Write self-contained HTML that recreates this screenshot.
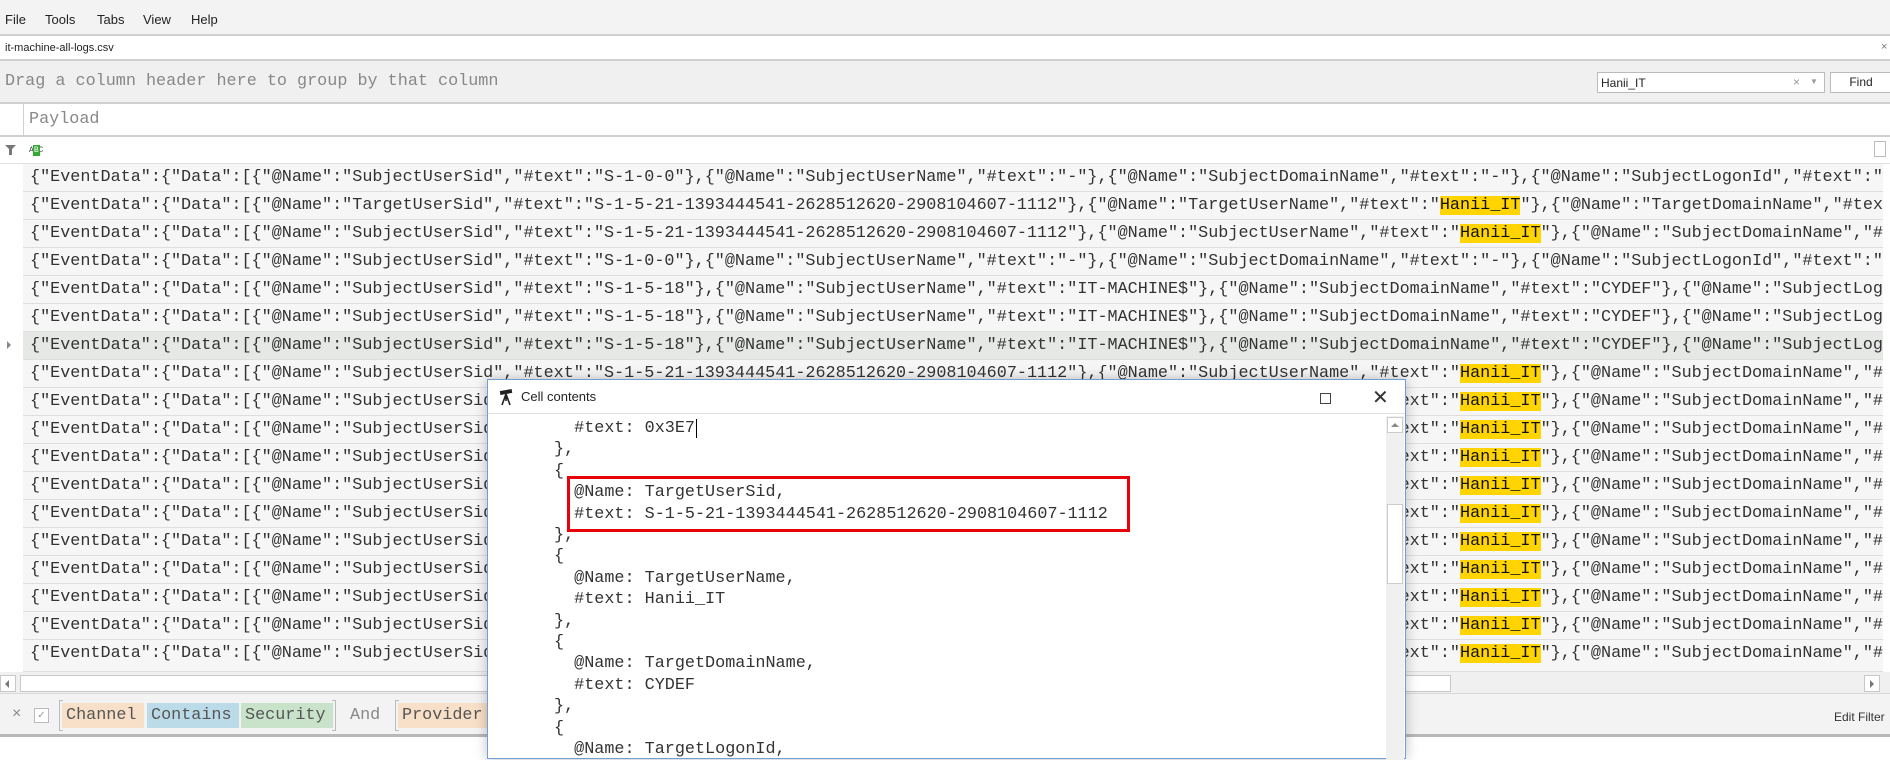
<!DOCTYPE html>
<html><head><meta charset="utf-8"><style>
*{margin:0;padding:0;box-sizing:border-box}
body{width:1890px;height:746px;overflow:hidden;background:#fff;position:relative;font-family:"Liberation Sans",sans-serif;color:#222}
.abs{position:absolute}
.mono{font-family:"Liberation Mono",monospace;font-size:16.8px}
.row{position:absolute;left:23px;width:1860px;height:28px;background:#f6f6f6;border-bottom:1px solid #dedede;white-space:nowrap;overflow:hidden;line-height:27px;padding-left:7px;color:#333}
.hl{background:#ffd400;color:#111}
.dl{position:absolute;left:0;white-space:pre;line-height:21px;color:#333}
.tag{position:absolute;top:703px;height:25px;line-height:25px;padding:0 4px;color:#555}
</style></head><body>
<!-- menu -->
<div class="abs" style="left:0;top:0;width:1890px;height:36px;background:#f3f3f3;border-bottom:2px solid #d0d0d0;font-size:13px">
<span class="abs" style="left:5px;top:12px">File</span>
<span class="abs" style="left:45px;top:12px">Tools</span>
<span class="abs" style="left:97px;top:12px">Tabs</span>
<span class="abs" style="left:143px;top:12px">View</span>
<span class="abs" style="left:191px;top:12px">Help</span>
</div>
<div class="abs" style="left:0;top:36px;width:1890px;height:25px;background:#fff;border-bottom:2px solid #d0d0d0;font-size:11px">
<span class="abs" style="left:5px;top:6px">it-machine-all-logs.csv</span>
<span class="abs" style="left:1881px;top:5px;color:#777">×</span>
</div>
<!-- group panel -->
<div class="abs" style="left:0;top:61px;width:1890px;height:43px;background:#f0f0f0;border-bottom:2px solid #cfcfcf">
<span class="abs mono" style="left:5px;top:11px;color:#888">Drag a column header here to group by that column</span>
</div>
<div class="abs" style="left:1597px;top:72px;width:228px;height:21px;background:#fff;border:1px solid #bbb;font-size:12px">
<span class="abs" style="left:3px;top:3px">Hanii_IT</span>
<span class="abs" style="left:195px;top:2px;color:#999">×</span>
<span class="abs" style="left:212px;top:4px;color:#999;font-size:8px">▼</span>
</div>
<div class="abs" style="left:1830px;top:72px;width:62px;height:21px;background:#fff;border:1px solid #bbb;font-size:12px;text-align:center;line-height:19px">Find</div>
<!-- header -->
<div class="abs" style="left:0;top:104px;width:1890px;height:33px;background:#fff;border-bottom:2px solid #cfcfcf"></div>
<div class="abs" style="left:23px;top:104px;width:1px;height:560px;background:#d0d0d0"></div>
<span class="abs mono" style="left:29px;top:110px;color:#888">Payload</span>
<!-- filter row -->
<div class="abs" style="left:0;top:137px;width:1890px;height:27px;background:#fff;border-bottom:1px solid #e0e0e0"></div>
<svg class="abs" style="left:5px;top:145px" width="11" height="10"><path d="M0 0H11L7 4V10H4V4Z" fill="#777"/></svg>
<span class="abs" style="left:29px;top:146px;font-size:8px;font-family:'Liberation Mono',monospace;color:#444">A<span style="background:#3a3;color:#fff;outline:1px solid #3a3">B</span>C</span>
<div class="abs" style="left:1874px;top:141px;width:12px;height:16px;border:1px solid #bbb;background:#fff"></div>
<!-- rows -->
<div class="mono">
<div class="row" style="top:164px">{"EventData":{"Data":[{"@Name":"SubjectUserSid","#text":"S-1-0-0"},{"@Name":"SubjectUserName","#text":"-"},{"@Name":"SubjectDomainName","#text":"-"},{"@Name":"SubjectLogonId","#text":"0x0"}</div>
<div class="row" style="top:192px">{"EventData":{"Data":[{"@Name":"TargetUserSid","#text":"S-1-5-21-1393444541-2628512620-2908104607-1112"},{"@Name":"TargetUserName","#text":"<span class="hl">Hanii_IT</span>"},{"@Name":"TargetDomainName","#text":"CYDEF"}</div>
<div class="row" style="top:220px">{"EventData":{"Data":[{"@Name":"SubjectUserSid","#text":"S-1-5-21-1393444541-2628512620-2908104607-1112"},{"@Name":"SubjectUserName","#text":"<span class="hl">Hanii_IT</span>"},{"@Name":"SubjectDomainName","#text":"CYDEF"}</div>
<div class="row" style="top:248px">{"EventData":{"Data":[{"@Name":"SubjectUserSid","#text":"S-1-0-0"},{"@Name":"SubjectUserName","#text":"-"},{"@Name":"SubjectDomainName","#text":"-"},{"@Name":"SubjectLogonId","#text":"0x0"}</div>
<div class="row" style="top:276px">{"EventData":{"Data":[{"@Name":"SubjectUserSid","#text":"S-1-5-18"},{"@Name":"SubjectUserName","#text":"IT-MACHINE$"},{"@Name":"SubjectDomainName","#text":"CYDEF"},{"@Name":"SubjectLogonId"}</div>
<div class="row" style="top:304px">{"EventData":{"Data":[{"@Name":"SubjectUserSid","#text":"S-1-5-18"},{"@Name":"SubjectUserName","#text":"IT-MACHINE$"},{"@Name":"SubjectDomainName","#text":"CYDEF"},{"@Name":"SubjectLogonId"}</div>
<div class="row" style="top:332px;background:#e5e8e5">{"EventData":{"Data":[{"@Name":"SubjectUserSid","#text":"S-1-5-18"},{"@Name":"SubjectUserName","#text":"IT-MACHINE$"},{"@Name":"SubjectDomainName","#text":"CYDEF"},{"@Name":"SubjectLogonId"}</div>
<div class="row" style="top:360px">{"EventData":{"Data":[{"@Name":"SubjectUserSid","#text":"S-1-5-21-1393444541-2628512620-2908104607-1112"},{"@Name":"SubjectUserName","#text":"<span class="hl">Hanii_IT</span>"},{"@Name":"SubjectDomainName","#text":"CYDEF"}</div>
<div class="row" style="top:388px">{"EventData":{"Data":[{"@Name":"SubjectUserSid","#text":"S-1-5-21-1393444541-2628512620-2908104607-1112"},{"@Name":"SubjectUserName","#text":"<span class="hl">Hanii_IT</span>"},{"@Name":"SubjectDomainName","#text":"CYDEF"}</div>
<div class="row" style="top:416px">{"EventData":{"Data":[{"@Name":"SubjectUserSid","#text":"S-1-5-21-1393444541-2628512620-2908104607-1112"},{"@Name":"SubjectUserName","#text":"<span class="hl">Hanii_IT</span>"},{"@Name":"SubjectDomainName","#text":"CYDEF"}</div>
<div class="row" style="top:444px">{"EventData":{"Data":[{"@Name":"SubjectUserSid","#text":"S-1-5-21-1393444541-2628512620-2908104607-1112"},{"@Name":"SubjectUserName","#text":"<span class="hl">Hanii_IT</span>"},{"@Name":"SubjectDomainName","#text":"CYDEF"}</div>
<div class="row" style="top:472px">{"EventData":{"Data":[{"@Name":"SubjectUserSid","#text":"S-1-5-21-1393444541-2628512620-2908104607-1112"},{"@Name":"SubjectUserName","#text":"<span class="hl">Hanii_IT</span>"},{"@Name":"SubjectDomainName","#text":"CYDEF"}</div>
<div class="row" style="top:500px">{"EventData":{"Data":[{"@Name":"SubjectUserSid","#text":"S-1-5-21-1393444541-2628512620-2908104607-1112"},{"@Name":"SubjectUserName","#text":"<span class="hl">Hanii_IT</span>"},{"@Name":"SubjectDomainName","#text":"CYDEF"}</div>
<div class="row" style="top:528px">{"EventData":{"Data":[{"@Name":"SubjectUserSid","#text":"S-1-5-21-1393444541-2628512620-2908104607-1112"},{"@Name":"SubjectUserName","#text":"<span class="hl">Hanii_IT</span>"},{"@Name":"SubjectDomainName","#text":"CYDEF"}</div>
<div class="row" style="top:556px">{"EventData":{"Data":[{"@Name":"SubjectUserSid","#text":"S-1-5-21-1393444541-2628512620-2908104607-1112"},{"@Name":"SubjectUserName","#text":"<span class="hl">Hanii_IT</span>"},{"@Name":"SubjectDomainName","#text":"CYDEF"}</div>
<div class="row" style="top:584px">{"EventData":{"Data":[{"@Name":"SubjectUserSid","#text":"S-1-5-21-1393444541-2628512620-2908104607-1112"},{"@Name":"SubjectUserName","#text":"<span class="hl">Hanii_IT</span>"},{"@Name":"SubjectDomainName","#text":"CYDEF"}</div>
<div class="row" style="top:612px">{"EventData":{"Data":[{"@Name":"SubjectUserSid","#text":"S-1-5-21-1393444541-2628512620-2908104607-1112"},{"@Name":"SubjectUserName","#text":"<span class="hl">Hanii_IT</span>"},{"@Name":"SubjectDomainName","#text":"CYDEF"}</div>
<div class="row" style="top:640px;height:32px">{"EventData":{"Data":[{"@Name":"SubjectUserSid","#text":"S-1-5-21-1393444541-2628512620-2908104607-1112"},{"@Name":"SubjectUserName","#text":"<span class="hl">Hanii_IT</span>"},{"@Name":"SubjectDomainName","#text":"CYDEF"}</div>
</div>
<div class="abs" style="left:7px;top:341px;width:0;height:0;border-left:4px solid #888;border-top:4px solid transparent;border-bottom:4px solid transparent"></div>
<!-- h scrollbar -->
<div class="abs" style="left:0;top:672px;width:1890px;height:22px;background:#f0f0f0;border-bottom:1px solid #d8d8d8"></div>
<div class="abs" style="left:0;top:675px;width:16px;height:17px;background:#fff;border:1px solid #c8c8c8"></div>
<div class="abs" style="left:5px;top:680px;border-right:4px solid #777;border-top:4px solid transparent;border-bottom:4px solid transparent"></div>
<div class="abs" style="left:20px;top:675px;width:1431px;height:17px;background:#fff;border:1px solid #c8c8c8"></div>
<div class="abs" style="left:1864px;top:675px;width:16px;height:17px;background:#fff;border:1px solid #c8c8c8"></div>
<div class="abs" style="left:1870px;top:680px;border-left:4px solid #777;border-top:4px solid transparent;border-bottom:4px solid transparent"></div>
<!-- filter bar -->
<div class="abs" style="left:0;top:694px;width:1890px;height:43px;background:#f3f3f3;border-bottom:3px solid #b8b8b8"></div>
<span class="abs" style="left:12px;top:705px;color:#888;font-size:16px">×</span>
<div class="abs" style="left:34px;top:708px;width:15px;height:15px;border:1px solid #bbb;background:#fff;color:#999;font-size:10px;text-align:center;line-height:13px">✓</div>
<div class="abs" style="left:59px;top:700px;width:4px;height:31px;border:1px solid #bbb;border-right:none"></div>
<div class="tag mono" style="left:62px;width:82px;background:#f8dfc8">Channel</div>
<div class="tag mono" style="left:147px;width:92px;background:#bcdbe8">Contains</div>
<div class="tag mono" style="left:241px;width:92px;background:#c8e3ca">Security</div>
<div class="abs" style="left:332px;top:700px;width:4px;height:31px;border:1px solid #bbb;border-left:none"></div>
<div class="tag mono" style="left:346px;color:#888">And</div>
<div class="abs" style="left:395px;top:700px;width:4px;height:31px;border:1px solid #bbb;border-right:none"></div>
<div class="tag mono" style="left:398px;width:100px;background:#f8dfc8">Provider</div>
<span class="abs" style="left:1834px;top:710px;font-size:12px;color:#333">Edit Filter</span>
<!-- dialog -->
<div class="abs" style="left:487px;top:379px;width:919px;height:380px;background:#fff;border:1px solid #6f9fd6;box-shadow:0 0 12px rgba(0,0,0,.25)">
<div class="abs" style="left:0;top:0;width:917px;height:34px;border-bottom:1px solid #e2e2e2">
<svg class="abs" style="left:11px;top:8px" width="18" height="18"><rect x="1" y="2" width="12" height="4" fill="#222" transform="rotate(-10 7 4)"/><path d="M7 6L3 17M7 6L11 17M7 6V13" stroke="#222" stroke-width="1.6" fill="none"/></svg>
<span class="abs" style="left:33px;top:9px;font-size:13px">Cell contents</span>
<div class="abs" style="left:832px;top:13px;width:11px;height:11px;border:1px solid #444"></div>
<span class="abs" style="left:884px;top:5px;font-size:20px;color:#333">✕</span>
</div>
<div class="abs" style="left:898px;top:36px;width:18px;height:344px;background:#f0f0f0"></div>
<div class="abs" style="left:899px;top:37px;width:16px;height:16px;background:#fff;border:1px solid #ccc"></div>
<div class="abs" style="left:903px;top:43px;border-bottom:4px solid #888;border-left:4px solid transparent;border-right:4px solid transparent"></div>
<div class="abs" style="left:899px;top:124px;width:16px;height:80px;background:#fff;border:1px solid #ccc"></div>
<div class="abs" style="left:79px;top:96px;width:563px;height:56px;border:3px solid #e8000b"></div>
<div class="mono" style="position:absolute;left:66px;top:38px">
<div class="dl" style="top:0">  #text: 0x3E7<span style="border-left:1px solid #000;margin-left:1px"></span></div>
<div class="dl" style="top:21.4px">},</div>
<div class="dl" style="top:42.8px">{</div>
<div class="dl" style="top:64.2px">  @Name: TargetUserSid,</div>
<div class="dl" style="top:85.6px">  #text: S-1-5-21-1393444541-2628512620-2908104607-1112</div>
<div class="dl" style="top:107px">},</div>
<div class="dl" style="top:128.4px">{</div>
<div class="dl" style="top:149.8px">  @Name: TargetUserName,</div>
<div class="dl" style="top:171.2px">  #text: Hanii_IT</div>
<div class="dl" style="top:192.6px">},</div>
<div class="dl" style="top:214px">{</div>
<div class="dl" style="top:235.4px">  @Name: TargetDomainName,</div>
<div class="dl" style="top:256.8px">  #text: CYDEF</div>
<div class="dl" style="top:278.2px">},</div>
<div class="dl" style="top:299.6px">{</div>
<div class="dl" style="top:321px">  @Name: TargetLogonId,</div>
</div>
</div>
</body></html>
